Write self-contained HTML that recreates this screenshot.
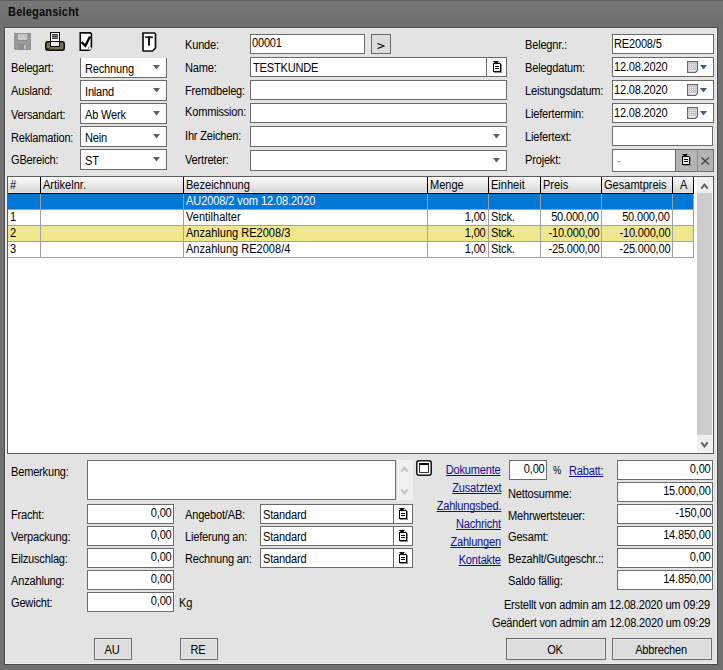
<!DOCTYPE html>
<html><head><meta charset="utf-8"><title>Belegansicht</title><style>
*{margin:0;padding:0}
html,body{width:723px;height:670px;overflow:hidden}
body{position:relative;background:#717171;font-family:"Liberation Sans",sans-serif;font-size:12px;line-height:14px;letter-spacing:-0.2px;color:#000}
.a{position:absolute;box-sizing:border-box}
.t{white-space:nowrap;transform:scaleX(0.92);transform-origin:0 0}
.r{text-align:right;transform-origin:100% 0}
.c{text-align:center;transform-origin:50% 0}
.inp{background:#fff;border:1px solid #6a6a6a}
.btn{background:#dddddd;border:1px solid #6a6a6a;box-shadow:inset 1px 1px 0 #f2f2f2,inset -1px -1px 0 #f2f2f2}
.lnk{color:#10108c;text-decoration:underline;text-decoration-skip-ink:none;text-underline-offset:1px}
svg{display:block}
</style></head><body>
<div class="a" style="left:0px;top:0px;width:723px;height:1px;background:#5e5e5e"></div>
<div class="a" style="left:0px;top:1px;width:723px;height:26px;background:linear-gradient(#777,#6f6f6f)"></div>
<div class="a t" style="left:8px;top:5px;font-weight:bold;letter-spacing:0.2px;color:#0a0a0a">Belegansicht</div>
<div class="a" style="left:4px;top:27px;width:714px;height:638px;background:#e3e3e3;border:1px solid #474747;box-shadow:inset 1px 1px 0 #eeeeee,inset -1px -1px 0 #eeeeee"></div>
<svg class="a" style="left:14px;top:33px" width="17" height="17" viewBox="0 0 17 17">
<path d="M0 0H17V17H2L0 15Z" fill="#9a9a9a"/>
<rect x="4" y="1" width="9" height="6" fill="#c9c9c9"/>
<rect x="4" y="7" width="9" height="1" fill="#8a8a8a"/>
<rect x="4" y="11" width="9" height="6" fill="#8e8e8e"/>
<rect x="10" y="12" width="2" height="4" fill="#c4c4c4"/>
<path d="M0 0H17V17H2L0 15Z" fill="none" stroke="#8c8c8c" stroke-width="1"/>
</svg>
<svg class="a" style="left:45px;top:32px" width="20" height="19" viewBox="0 0 20 19">
<rect x="0.75" y="9.75" width="18.5" height="8.5" rx="2.2" fill="#78724f" stroke="#0a0a0a" stroke-width="1.5"/>
<rect x="5" y="0" width="10" height="15" fill="#0a0a0a"/>
<rect x="6" y="1" width="8" height="8" fill="#fff"/>
<rect x="6" y="10" width="8" height="4" fill="#e6e6e6"/>
<rect x="7" y="2" width="6" height="5" fill="#8a8a8a"/>
<rect x="7" y="2" width="6" height="1" fill="#333"/><rect x="7" y="4" width="6" height="1" fill="#333"/><rect x="7" y="6" width="6" height="1" fill="#444"/>
<rect x="2" y="16" width="3" height="1" fill="#2a2a2a"/>
</svg>
<svg class="a" style="left:79px;top:32px" width="15" height="20" viewBox="0 0 15 20">
<path d="M1.25 0.9H11.4L12.4 1.9V16L10 18.2H1.25Z" fill="#fff" stroke="#0a0a0a" stroke-width="1.6"/>
<path d="M2.6 10.2L6.4 13.8L11 4.6" fill="none" stroke="#000" stroke-width="2.3"/>
<circle cx="11" cy="16.3" r="1.6" fill="#fff" stroke="#666" stroke-width="0.7"/>
</svg>
<svg class="a" style="left:142px;top:32px" width="15" height="20" viewBox="0 0 15 20">
<path d="M1 1H12.5L13.5 2V16L10.5 19H1.5L1 18.5Z" fill="#fff" stroke="#111" stroke-width="1.7"/>
<rect x="3.2" y="4.3" width="7.6" height="1.8" fill="#1a1a1a"/>
<rect x="6" y="4.3" width="2" height="9.4" fill="#1a1a1a"/>
</svg>
<div class="a t" style="left:11px;top:61px;">Belegart:</div>
<div class="a t" style="left:11px;top:84px;">Ausland:</div>
<div class="a t" style="left:11px;top:108px;">Versandart:</div>
<div class="a t" style="left:11px;top:131px;">Reklamation:</div>
<div class="a t" style="left:11px;top:153px;">GBereich:</div>
<div class="a inp" style="left:80px;top:58px;width:87px;height:20px;border-top:none"></div>
<div class="a t" style="left:85px;top:62px;">Rechnung</div>
<svg class="a" style="left:153px;top:65px" width="7" height="5"><path d="M0 0H7L3.5 4.6Z" fill="#5f5f5f"/></svg>
<div class="a inp" style="left:80px;top:80px;width:87px;height:21px;"></div>
<div class="a t" style="left:85px;top:85px;">Inland</div>
<svg class="a" style="left:153px;top:88px" width="7" height="5"><path d="M0 0H7L3.5 4.6Z" fill="#5f5f5f"/></svg>
<div class="a inp" style="left:80px;top:103px;width:87px;height:21px;"></div>
<div class="a t" style="left:85px;top:108px;">Ab Werk</div>
<svg class="a" style="left:153px;top:111px" width="7" height="5"><path d="M0 0H7L3.5 4.6Z" fill="#5f5f5f"/></svg>
<div class="a inp" style="left:80px;top:126px;width:87px;height:21px;"></div>
<div class="a t" style="left:85px;top:131px;">Nein</div>
<svg class="a" style="left:153px;top:134px" width="7" height="5"><path d="M0 0H7L3.5 4.6Z" fill="#5f5f5f"/></svg>
<div class="a inp" style="left:80px;top:149px;width:87px;height:21px;"></div>
<div class="a t" style="left:85px;top:154px;">ST</div>
<svg class="a" style="left:153px;top:157px" width="7" height="5"><path d="M0 0H7L3.5 4.6Z" fill="#5f5f5f"/></svg>
<div class="a t" style="left:185px;top:38px;">Kunde:</div>
<div class="a t" style="left:185px;top:61px;">Name:</div>
<div class="a t" style="left:185px;top:84px;">Fremdbeleg:</div>
<div class="a t" style="left:185px;top:105px;">Kommission:</div>
<div class="a t" style="left:185px;top:129px;">Ihr Zeichen:</div>
<div class="a t" style="left:185px;top:153px;">Vertreter:</div>
<div class="a inp" style="left:250px;top:34px;width:115px;height:20px;"></div>
<div class="a t" style="left:252px;top:36px;">00001</div>
<div class="a" style="left:371px;top:34px;width:20px;height:20px;background:#dcdcdc;border:1px solid #6a6a6a"></div>
<svg class="a" style="left:377px;top:43px" width="8" height="6"><path d="M0.5 0.5L7 3L0.5 5.5" fill="none" stroke="#111" stroke-width="1.3"/></svg>
<div class="a inp" style="left:250px;top:57px;width:257px;height:20px;"></div>
<div class="a" style="left:486px;top:57px;width:1px;height:20px;background:#6a6a6a"></div>
<div class="a t" style="left:253px;top:61px;">TESTKUNDE</div>
<svg class="a" style="left:493px;top:61px" width="10" height="13" viewBox="0 0 10 13">
<rect x="0" y="2" width="8" height="9" fill="#000"/>
<rect x="1" y="3" width="6" height="7" fill="#fff"/>
<rect x="2" y="5" width="4" height="1" fill="#000"/>
<rect x="2" y="7" width="4" height="1" fill="#000"/>
<rect x="8" y="3" width="1" height="9" fill="#8a8a8a"/>
<rect x="1" y="11" width="8" height="1" fill="#8a8a8a"/>
<path d="M0 0H6L3 3.6Z" fill="#000"/>
<path d="M5.5 0.6L7.6 2.7" stroke="#9a9a9a" stroke-width="1"/>
</svg>
<div class="a inp" style="left:250px;top:80px;width:257px;height:20px;"></div>
<div class="a inp" style="left:250px;top:103px;width:257px;height:20px;"></div>
<div class="a inp" style="left:250px;top:126px;width:257px;height:21px;"></div>
<svg class="a" style="left:493px;top:134px" width="7" height="5"><path d="M0 0H7L3.5 4.6Z" fill="#5f5f5f"/></svg>
<div class="a inp" style="left:250px;top:150px;width:257px;height:21px;"></div>
<svg class="a" style="left:493px;top:158px" width="7" height="5"><path d="M0 0H7L3.5 4.6Z" fill="#5f5f5f"/></svg>
<div class="a t" style="left:525px;top:38px;">Belegnr.:</div>
<div class="a t" style="left:525px;top:61px;">Belegdatum:</div>
<div class="a t" style="left:525px;top:84px;">Leistungsdatum:</div>
<div class="a t" style="left:525px;top:107px;">Liefertermin:</div>
<div class="a t" style="left:525px;top:130px;">Liefertext:</div>
<div class="a t" style="left:525px;top:153px;">Projekt:</div>
<div class="a inp" style="left:612px;top:34px;width:102px;height:20px;"></div>
<div class="a t" style="left:614px;top:37px;">RE2008/5</div>
<div class="a inp" style="left:612px;top:57px;width:102px;height:20px;"></div>
<div class="a t" style="left:614px;top:60px;">12.08.2020</div>
<svg class="a" style="left:687px;top:61px" width="12" height="12" viewBox="0 0 12 12">
<path d="M0.6 0.6H10.4V9.4L8.4 11.4H0.6Z" fill="#eef0f6" stroke="#6e6460" stroke-width="1.2"/>
<rect x="2" y="2" width="7" height="7" fill="#c3c6cf"/>
<g fill="#f4f6fa"><rect x="3" y="3" width="1" height="1"/><rect x="5" y="3" width="1" height="1"/><rect x="7" y="3" width="1" height="1"/>
<rect x="3" y="5" width="1" height="1"/><rect x="5" y="5" width="1" height="1"/><rect x="7" y="5" width="1" height="1"/>
<rect x="3" y="7" width="1" height="1"/><rect x="5" y="7" width="1" height="1"/></g>
</svg>
<svg class="a" style="left:700px;top:65px" width="7" height="5"><path d="M0 0H7L3.5 4.6Z" fill="#3d5a8a"/></svg>
<div class="a inp" style="left:612px;top:80px;width:102px;height:20px;"></div>
<div class="a t" style="left:614px;top:83px;">12.08.2020</div>
<svg class="a" style="left:687px;top:84px" width="12" height="12" viewBox="0 0 12 12">
<path d="M0.6 0.6H10.4V9.4L8.4 11.4H0.6Z" fill="#eef0f6" stroke="#6e6460" stroke-width="1.2"/>
<rect x="2" y="2" width="7" height="7" fill="#c3c6cf"/>
<g fill="#f4f6fa"><rect x="3" y="3" width="1" height="1"/><rect x="5" y="3" width="1" height="1"/><rect x="7" y="3" width="1" height="1"/>
<rect x="3" y="5" width="1" height="1"/><rect x="5" y="5" width="1" height="1"/><rect x="7" y="5" width="1" height="1"/>
<rect x="3" y="7" width="1" height="1"/><rect x="5" y="7" width="1" height="1"/></g>
</svg>
<svg class="a" style="left:700px;top:88px" width="7" height="5"><path d="M0 0H7L3.5 4.6Z" fill="#3d5a8a"/></svg>
<div class="a inp" style="left:612px;top:103px;width:102px;height:20px;"></div>
<div class="a t" style="left:614px;top:106px;">12.08.2020</div>
<svg class="a" style="left:687px;top:107px" width="12" height="12" viewBox="0 0 12 12">
<path d="M0.6 0.6H10.4V9.4L8.4 11.4H0.6Z" fill="#eef0f6" stroke="#6e6460" stroke-width="1.2"/>
<rect x="2" y="2" width="7" height="7" fill="#c3c6cf"/>
<g fill="#f4f6fa"><rect x="3" y="3" width="1" height="1"/><rect x="5" y="3" width="1" height="1"/><rect x="7" y="3" width="1" height="1"/>
<rect x="3" y="5" width="1" height="1"/><rect x="5" y="5" width="1" height="1"/><rect x="7" y="5" width="1" height="1"/>
<rect x="3" y="7" width="1" height="1"/><rect x="5" y="7" width="1" height="1"/></g>
</svg>
<svg class="a" style="left:700px;top:111px" width="7" height="5"><path d="M0 0H7L3.5 4.6Z" fill="#3d5a8a"/></svg>
<div class="a inp" style="left:612px;top:126px;width:101px;height:20px;"></div>
<div class="a inp" style="left:612px;top:149px;width:102px;height:23px;"></div>
<div class="a" style="left:675px;top:149px;width:39px;height:23px;background:#b4b4b4;border:1px solid #6a6a6a"></div>
<div class="a" style="left:697px;top:149px;width:1px;height:23px;background:#8a8a8a"></div>
<svg class="a" style="left:682px;top:154px" width="10" height="13" viewBox="0 0 10 13">
<rect x="0" y="2" width="8" height="9" fill="#000"/>
<rect x="1" y="3" width="6" height="7" fill="#ececec"/>
<rect x="2" y="5" width="4" height="1" fill="#000"/>
<rect x="2" y="7" width="4" height="1" fill="#000"/>
<rect x="8" y="3" width="1" height="9" fill="#8a8a8a"/>
<rect x="1" y="11" width="8" height="1" fill="#8a8a8a"/>
<path d="M0 0H6L3 3.6Z" fill="#000"/>
<path d="M5.5 0.6L7.6 2.7" stroke="#9a9a9a" stroke-width="1"/>
</svg>
<svg class="a" style="left:701px;top:157px" width="9" height="8"><path d="M0.5 0.5L8 7.5M8 0.5L0.5 7.5" stroke="#484848" stroke-width="1.4"/></svg>
<div class="a t" style="left:617px;top:154px;color:#9a9a9a">-</div>
<div class="a" style="left:7px;top:176px;width:707px;height:278px;background:#fff;border:1px solid #5a5a5a"></div>
<div class="a" style="left:8px;top:177px;width:686px;height:16px;background:linear-gradient(#fafafa,#ececec 40%,#dadada 82%,#d8d8d8 90%,#e8e8e8)"></div>
<div class="a" style="left:8px;top:193px;width:686px;height:1px;background:#000"></div>
<div class="a" style="left:40px;top:177px;width:1px;height:16px;background:#000"></div>
<div class="a" style="left:183px;top:177px;width:1px;height:16px;background:#000"></div>
<div class="a" style="left:427px;top:177px;width:1px;height:16px;background:#000"></div>
<div class="a" style="left:488px;top:177px;width:1px;height:16px;background:#000"></div>
<div class="a" style="left:540px;top:177px;width:1px;height:16px;background:#000"></div>
<div class="a" style="left:601px;top:177px;width:1px;height:16px;background:#000"></div>
<div class="a" style="left:672px;top:177px;width:1px;height:16px;background:#000"></div>
<div class="a" style="left:693px;top:177px;width:1px;height:16px;background:#000"></div>
<div class="a" style="left:8px;top:194px;width:686px;height:15px;background:#0078d7"></div>
<div class="a" style="left:8px;top:209px;width:686px;height:1px;background:#a0a0a0"></div>
<div class="a" style="left:8px;top:210px;width:686px;height:15px;background:#fff"></div>
<div class="a" style="left:8px;top:225px;width:686px;height:1px;background:#a0a0a0"></div>
<div class="a" style="left:8px;top:226px;width:686px;height:15px;background:#f0e68c"></div>
<div class="a" style="left:8px;top:241px;width:686px;height:1px;background:#a0a0a0"></div>
<div class="a" style="left:8px;top:242px;width:686px;height:15px;background:#fff"></div>
<div class="a" style="left:8px;top:257px;width:686px;height:1px;background:#a0a0a0"></div>
<div class="a" style="left:40px;top:194px;width:1px;height:64px;background:#a0a0a0"></div>
<div class="a" style="left:183px;top:194px;width:1px;height:64px;background:#a0a0a0"></div>
<div class="a" style="left:427px;top:194px;width:1px;height:64px;background:#a0a0a0"></div>
<div class="a" style="left:488px;top:194px;width:1px;height:64px;background:#a0a0a0"></div>
<div class="a" style="left:540px;top:194px;width:1px;height:64px;background:#a0a0a0"></div>
<div class="a" style="left:601px;top:194px;width:1px;height:64px;background:#a0a0a0"></div>
<div class="a" style="left:672px;top:194px;width:1px;height:64px;background:#a0a0a0"></div>
<div class="a" style="left:693px;top:194px;width:1px;height:64px;background:#a0a0a0"></div>
<div class="a t" style="left:10px;top:178px;letter-spacing:0px">#</div>
<div class="a t" style="left:43px;top:178px;letter-spacing:0px">Artikelnr.</div>
<div class="a t" style="left:186px;top:178px;letter-spacing:0px">Bezeichnung</div>
<div class="a t" style="left:430px;top:178px;letter-spacing:0px">Menge</div>
<div class="a t" style="left:491px;top:178px;letter-spacing:0px">Einheit</div>
<div class="a t" style="left:543px;top:178px;letter-spacing:0px">Preis</div>
<div class="a t" style="left:604px;top:178px;letter-spacing:0px">Gesamtpreis</div>
<div class="a t" style="left:680px;top:178px;letter-spacing:0px">A</div>
<div class="a t" style="left:186px;top:194px;color:#fff;letter-spacing:-0.1px">AU2008/2 vom 12.08.2020</div>
<div class="a t" style="left:10px;top:210px;">1</div>
<div class="a t" style="left:186px;top:210px;letter-spacing:0px">Ventilhalter</div>
<div class="a t r" style="right:237px;top:210px;">1,00</div>
<div class="a t" style="left:491px;top:210px;">Stck.</div>
<div class="a t r" style="right:124px;top:210px;">50.000,00</div>
<div class="a t r" style="right:53px;top:210px;">50.000,00</div>
<div class="a t" style="left:10px;top:226px;">2</div>
<div class="a t" style="left:186px;top:226px;letter-spacing:0px">Anzahlung RE2008/3</div>
<div class="a t r" style="right:237px;top:226px;">1,00</div>
<div class="a t" style="left:491px;top:226px;">Stck.</div>
<div class="a t r" style="right:124px;top:226px;">-10.000,00</div>
<div class="a t r" style="right:53px;top:226px;">-10.000,00</div>
<div class="a t" style="left:10px;top:242px;">3</div>
<div class="a t" style="left:186px;top:242px;letter-spacing:0px">Anzahlung RE2008/4</div>
<div class="a t r" style="right:237px;top:242px;">1,00</div>
<div class="a t" style="left:491px;top:242px;">Stck.</div>
<div class="a t r" style="right:124px;top:242px;">-25.000,00</div>
<div class="a t r" style="right:53px;top:242px;">-25.000,00</div>
<div class="a" style="left:697px;top:177px;width:16px;height:276px;background:#f0f0f0"></div>
<div class="a" style="left:697px;top:193px;width:15px;height:242px;background:#cdcdcd"></div>
<svg class="a" style="left:700px;top:182px" width="9" height="8"><path d="M1.3 6.6L4.5 2.6L7.7 6.6" fill="none" stroke="#606060" stroke-width="2"/></svg>
<svg class="a" style="left:700px;top:441px" width="9" height="8"><path d="M1.3 1.4L4.5 5.4L7.7 1.4" fill="none" stroke="#606060" stroke-width="2"/></svg>
<div class="a t" style="left:11px;top:465px;">Bemerkung:</div>
<div class="a inp" style="left:87px;top:460px;width:309px;height:40px;"></div>
<div class="a" style="left:397px;top:460px;width:16px;height:40px;background:#f0f0f0"></div>
<svg class="a" style="left:400px;top:465px" width="9" height="8"><path d="M1.3 6.6L4.5 2.6L7.7 6.6" fill="none" stroke="#c2c2c2" stroke-width="2"/></svg>
<svg class="a" style="left:400px;top:488px" width="9" height="8"><path d="M1.3 1.4L4.5 5.4L7.7 1.4" fill="none" stroke="#c2c2c2" stroke-width="2"/></svg>
<svg class="a" style="left:416px;top:460px" width="16" height="16" viewBox="0 0 16 16">
<rect x="0.75" y="0.75" width="14.5" height="14.5" rx="2.5" fill="#fff" stroke="#151515" stroke-width="1.5"/>
<rect x="3.5" y="3.5" width="9" height="9" fill="#fff" stroke="#333" stroke-width="1"/>
<rect x="3" y="3" width="10" height="2" fill="#0a0a0a"/>
</svg>
<div class="a t" style="left:11px;top:508px;">Fracht:</div>
<div class="a t" style="left:11px;top:530px;">Verpackung:</div>
<div class="a t" style="left:11px;top:552px;">Eilzuschlag:</div>
<div class="a t" style="left:11px;top:574px;">Anzahlung:</div>
<div class="a t" style="left:11px;top:596px;">Gewicht:</div>
<div class="a inp" style="left:87px;top:504px;width:87px;height:20px;"></div>
<div class="a t r" style="right:551px;top:506px;">0,00</div>
<div class="a inp" style="left:87px;top:526px;width:87px;height:20px;"></div>
<div class="a t r" style="right:551px;top:528px;">0,00</div>
<div class="a inp" style="left:87px;top:548px;width:87px;height:20px;"></div>
<div class="a t r" style="right:551px;top:550px;">0,00</div>
<div class="a inp" style="left:87px;top:570px;width:87px;height:20px;"></div>
<div class="a t r" style="right:551px;top:572px;">0,00</div>
<div class="a inp" style="left:87px;top:592px;width:87px;height:20px;"></div>
<div class="a t r" style="right:551px;top:594px;">0,00</div>
<div class="a t" style="left:179px;top:596px;">Kg</div>
<div class="a t" style="left:185px;top:508px;">Angebot/AB:</div>
<div class="a inp" style="left:260px;top:504px;width:153px;height:20px;"></div>
<div class="a" style="left:393px;top:504px;width:1px;height:20px;background:#6a6a6a"></div>
<div class="a t" style="left:263px;top:508px;">Standard</div>
<svg class="a" style="left:399px;top:508px" width="10" height="13" viewBox="0 0 10 13">
<rect x="0" y="2" width="8" height="9" fill="#000"/>
<rect x="1" y="3" width="6" height="7" fill="#fff"/>
<rect x="2" y="5" width="4" height="1" fill="#000"/>
<rect x="2" y="7" width="4" height="1" fill="#000"/>
<rect x="8" y="3" width="1" height="9" fill="#8a8a8a"/>
<rect x="1" y="11" width="8" height="1" fill="#8a8a8a"/>
<path d="M0 0H6L3 3.6Z" fill="#000"/>
<path d="M5.5 0.6L7.6 2.7" stroke="#9a9a9a" stroke-width="1"/>
</svg>
<div class="a t" style="left:185px;top:530px;">Lieferung an:</div>
<div class="a inp" style="left:260px;top:526px;width:153px;height:20px;"></div>
<div class="a" style="left:393px;top:526px;width:1px;height:20px;background:#6a6a6a"></div>
<div class="a t" style="left:263px;top:530px;">Standard</div>
<svg class="a" style="left:399px;top:530px" width="10" height="13" viewBox="0 0 10 13">
<rect x="0" y="2" width="8" height="9" fill="#000"/>
<rect x="1" y="3" width="6" height="7" fill="#fff"/>
<rect x="2" y="5" width="4" height="1" fill="#000"/>
<rect x="2" y="7" width="4" height="1" fill="#000"/>
<rect x="8" y="3" width="1" height="9" fill="#8a8a8a"/>
<rect x="1" y="11" width="8" height="1" fill="#8a8a8a"/>
<path d="M0 0H6L3 3.6Z" fill="#000"/>
<path d="M5.5 0.6L7.6 2.7" stroke="#9a9a9a" stroke-width="1"/>
</svg>
<div class="a t" style="left:185px;top:552px;">Rechnung an:</div>
<div class="a inp" style="left:260px;top:548px;width:153px;height:20px;"></div>
<div class="a" style="left:393px;top:548px;width:1px;height:20px;background:#6a6a6a"></div>
<div class="a t" style="left:263px;top:552px;">Standard</div>
<svg class="a" style="left:399px;top:552px" width="10" height="13" viewBox="0 0 10 13">
<rect x="0" y="2" width="8" height="9" fill="#000"/>
<rect x="1" y="3" width="6" height="7" fill="#fff"/>
<rect x="2" y="5" width="4" height="1" fill="#000"/>
<rect x="2" y="7" width="4" height="1" fill="#000"/>
<rect x="8" y="3" width="1" height="9" fill="#8a8a8a"/>
<rect x="1" y="11" width="8" height="1" fill="#8a8a8a"/>
<path d="M0 0H6L3 3.6Z" fill="#000"/>
<path d="M5.5 0.6L7.6 2.7" stroke="#9a9a9a" stroke-width="1"/>
</svg>
<div class="a t r" style="right:222px;top:463px;color:#10108c;text-decoration:underline;text-decoration-skip-ink:none">Dokumente</div>
<div class="a t r" style="right:222px;top:481px;color:#10108c;text-decoration:underline;text-decoration-skip-ink:none">Zusatztext</div>
<div class="a t r" style="right:222px;top:499px;color:#10108c;text-decoration:underline;text-decoration-skip-ink:none">Zahlungsbed.</div>
<div class="a t r" style="right:222px;top:517px;color:#10108c;text-decoration:underline;text-decoration-skip-ink:none">Nachricht</div>
<div class="a t r" style="right:222px;top:535px;color:#10108c;text-decoration:underline;text-decoration-skip-ink:none">Zahlungen</div>
<div class="a t r" style="right:222px;top:553px;color:#10108c;text-decoration:underline;text-decoration-skip-ink:none">Kontakte</div>
<div class="a inp" style="left:509px;top:460px;width:38px;height:20px;"></div>
<div class="a t r" style="right:178px;top:462px;">0,00</div>
<div class="a t" style="left:553px;top:464px;font-size:10px">%</div>
<div class="a t" style="left:569px;top:464px;color:#10108c;text-decoration:underline;text-decoration-skip-ink:none">Rabatt:</div>
<div class="a t" style="left:508px;top:487px;">Nettosumme:</div>
<div class="a t" style="left:508px;top:509px;">Mehrwertsteuer:</div>
<div class="a t" style="left:508px;top:530px;">Gesamt:</div>
<div class="a t" style="left:508px;top:552px;">Bezahlt/Gutgeschr.::</div>
<div class="a t" style="left:508px;top:574px;">Saldo fällig:</div>
<div class="a inp" style="left:617px;top:460px;width:96px;height:20px;"></div>
<div class="a t r" style="right:12px;top:462px;">0,00</div>
<div class="a inp" style="left:617px;top:482px;width:96px;height:20px;"></div>
<div class="a t r" style="right:12px;top:484px;">15.000,00</div>
<div class="a inp" style="left:617px;top:504px;width:96px;height:20px;"></div>
<div class="a t r" style="right:12px;top:506px;">-150,00</div>
<div class="a inp" style="left:617px;top:526px;width:96px;height:20px;"></div>
<div class="a t r" style="right:12px;top:528px;">14.850,00</div>
<div class="a inp" style="left:617px;top:548px;width:96px;height:20px;"></div>
<div class="a t r" style="right:12px;top:550px;">0,00</div>
<div class="a inp" style="left:617px;top:570px;width:96px;height:20px;"></div>
<div class="a t r" style="right:12px;top:572px;">14.850,00</div>
<div class="a t r" style="right:13px;top:598px;">Erstellt von admin am 12.08.2020 um 09:29</div>
<div class="a t r" style="right:13px;top:616px;">Geändert von admin am 12.08.2020 um 09:29</div>
<div class="a" style="left:94px;top:638px;width:38px;height:22px;background:#dddddd;border:1px solid #6a6a6a;box-shadow:inset 1px 1px 0 #e9e9e9,inset -1px -1px 0 #e9e9e9"></div>
<div class="a t c" style="left:93px;width:38px;top:643px;">AU</div>
<div class="a" style="left:180px;top:638px;width:38px;height:22px;background:#dddddd;border:1px solid #6a6a6a;box-shadow:inset 1px 1px 0 #e9e9e9,inset -1px -1px 0 #e9e9e9"></div>
<div class="a t c" style="left:179px;width:38px;top:643px;">RE</div>
<div class="a" style="left:506px;top:638px;width:100px;height:22px;background:#dddddd;border:1px solid #6a6a6a;box-shadow:inset 1px 1px 0 #e9e9e9,inset -1px -1px 0 #e9e9e9"></div>
<div class="a t c" style="left:505px;width:100px;top:643px;">OK</div>
<div class="a" style="left:612px;top:638px;width:100px;height:22px;background:#dddddd;border:1px solid #6a6a6a;box-shadow:inset 1px 1px 0 #e9e9e9,inset -1px -1px 0 #e9e9e9"></div>
<div class="a t c" style="left:611px;width:100px;top:643px;">Abbrechen</div>
</body></html>
